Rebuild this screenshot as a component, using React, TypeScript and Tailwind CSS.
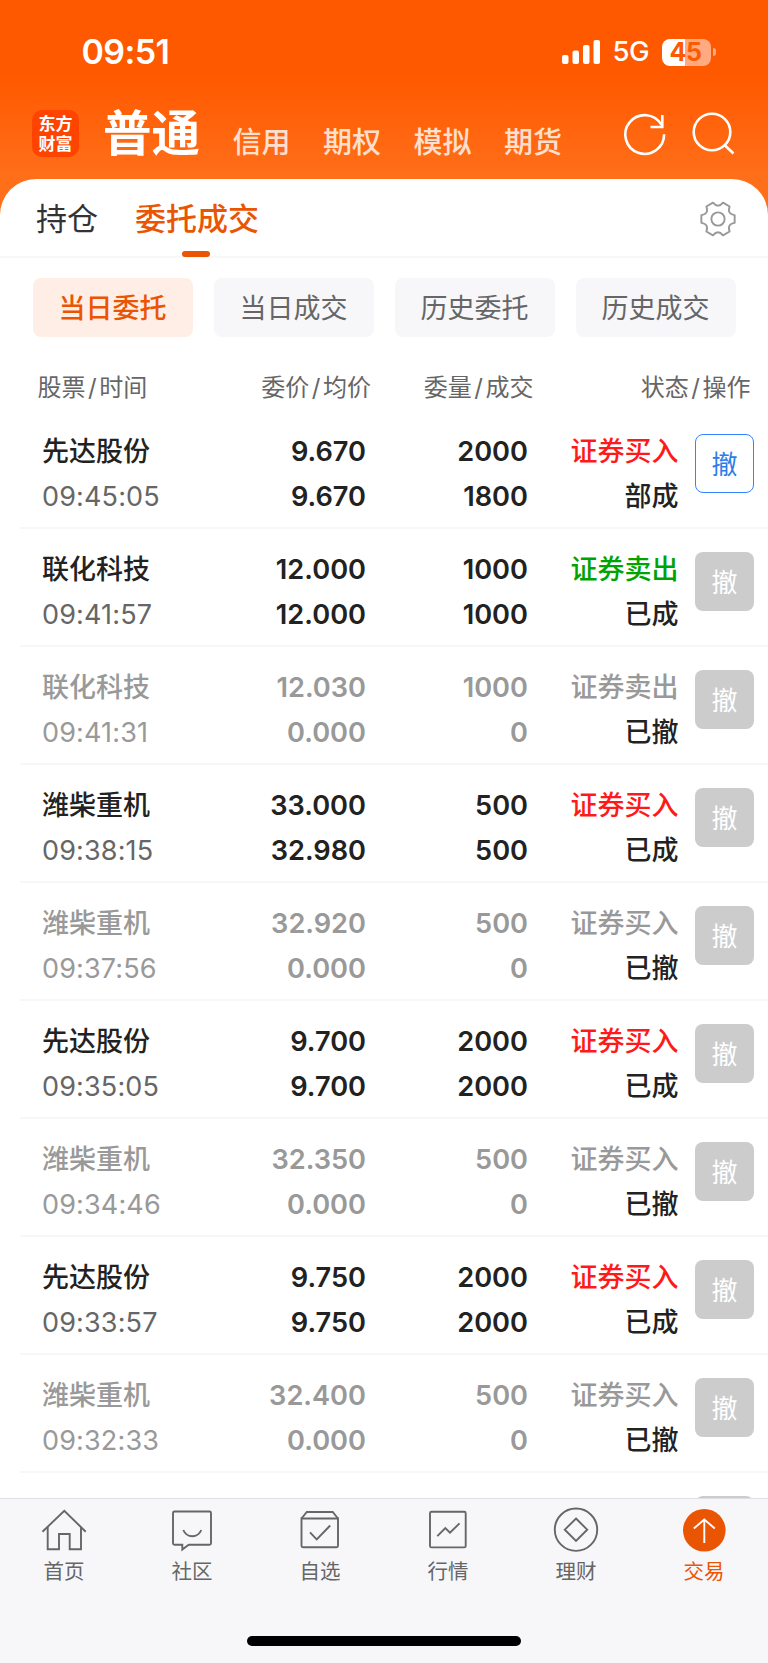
const FONT = "font-['Inter','Noto_Sans_CJK_SC',sans-serif]";

type Order = {
  name: string;
  time: string;
  price: string;
  avg: string;
  qty: string;
  filled: string;
  side: string;
  status: string;
};

const ORDERS: Order[] = [
  { name: "先达股份", time: "09:45:05", price: "9.670", avg: "9.670", qty: "2000", filled: "1800", side: "证券买入", status: "部成" },
  { name: "联化科技", time: "09:41:57", price: "12.000", avg: "12.000", qty: "1000", filled: "1000", side: "证券卖出", status: "已成" },
  { name: "联化科技", time: "09:41:31", price: "12.030", avg: "0.000", qty: "1000", filled: "0", side: "证券卖出", status: "已撤" },
  { name: "潍柴重机", time: "09:38:15", price: "33.000", avg: "32.980", qty: "500", filled: "500", side: "证券买入", status: "已成" },
  { name: "潍柴重机", time: "09:37:56", price: "32.920", avg: "0.000", qty: "500", filled: "0", side: "证券买入", status: "已撤" },
  { name: "先达股份", time: "09:35:05", price: "9.700", avg: "9.700", qty: "2000", filled: "2000", side: "证券买入", status: "已成" },
  { name: "潍柴重机", time: "09:34:46", price: "32.350", avg: "0.000", qty: "500", filled: "0", side: "证券买入", status: "已撤" },
  { name: "先达股份", time: "09:33:57", price: "9.750", avg: "9.750", qty: "2000", filled: "2000", side: "证券买入", status: "已成" },
  { name: "潍柴重机", time: "09:32:33", price: "32.400", avg: "0.000", qty: "500", filled: "0", side: "证券买入", status: "已撤" },
];

const MARKETS = ["信用", "期权", "模拟", "期货"];
const FILTERS = ["当日委托", "当日成交", "历史委托", "历史成交"];

const NAV = [
  {
    label: "首页",
    icon: (
      <>
        <path d="M2.5 25.7 24.3 4.8l21.4 20.9" />
        <path d="M7.7 21v22.3H19V28h10.7v15.3H41V21" />
      </>
    ),
  },
  {
    label: "社区",
    icon: (
      <>
        <path d="M6.5 5.5h35A1.5 1.5 0 0 1 43 7v30.2a1.5 1.5 0 0 1-1.5 1.5H20.7l-6.4 4.8v-4.8H6.5A1.5 1.5 0 0 1 5 37.2V7a1.5 1.5 0 0 1 1.5-1.5z" />
        <path d="M15.3 24c3.5 8.3 14.5 8.3 18 0" />
      </>
    ),
  },
  {
    label: "自选",
    icon: (
      <>
        <path d="M5.5 12.5H42v27.3a1.5 1.5 0 0 1-1.5 1.5H7a1.5 1.5 0 0 1-1.5-1.5z" />
        <path d="M5.5 12.5 10.8 6h25.900l5.300 6.500" />
        <path d="M14 26.3l6.7 7L34.2 19.5" />
      </>
    ),
  },
  {
    label: "行情",
    icon: (
      <>
        <rect x="6" y="5.7" width="35.7" height="35.7" rx="1.5" />
        <path d="M13.3 30.2l8-8.2 4.7 4.7 9.5-9.3" />
      </>
    ),
  },
  {
    label: "理财",
    icon: (
      <>
        <circle cx="24" cy="23.7" r="21.2" />
        <path d="M24 12.5 35.2 23.7 24 34.9 12.8 23.7z" />
      </>
    ),
  },
  {
    label: "交易",
    active: true,
    icon: (
      <>
        <circle cx="24.3" cy="24.3" r="21.3" fill="#ea5504" stroke="none" />
        <path d="M24.3 37V13.500M13.800 22.500l10.500-9 10.500 9" stroke="#fff" />
      </>
    ),
  },
];

function StatusBar() {
  return (
    <div className="flex h-[104px] items-center justify-between pl-[81.5px] pr-[52px]">
      <span className="text-[34px] font-semibold leading-none tracking-[-0.6px]">09:51</span>
      <div className="flex items-center">
        <svg className="h-6 w-[39px]" viewBox="0 0 39 24" fill="currentColor">
          <rect x="0" y="15" width="6.5" height="9" rx="2" />
          <rect x="10.5" y="10.5" width="6.5" height="13.5" rx="2" />
          <rect x="21" y="5" width="6.5" height="19" rx="2" />
          <rect x="31.5" y="0" width="6.5" height="24" rx="2" />
        </svg>
        <span className="ml-[11.5px] text-[27.5px] font-medium leading-none tracking-[-0.5px]">5G</span>
        <div className="ml-[13px] flex h-[27px] w-[49px] items-center justify-center rounded-lg bg-[linear-gradient(90deg,#fff_46%,#ffaa80_46%)] pr-0.5 text-[25px] font-bold leading-none tracking-[-0.5px] text-[#ff5900]">
          45
        </div>
        <div className="ml-[2px] h-2 w-[3px] rounded-r-full bg-[#ffaa80]" />
      </div>
    </div>
  );
}

function TopBar() {
  return (
    <div className="flex h-[75px] pl-8">
      <div className="mt-1.5 flex h-[47px] w-[47px] flex-col items-center justify-center rounded-[10px] bg-[#ff4400] text-[17px] font-bold leading-[20px]">
        <span>东方</span>
        <span>财富</span>
      </div>
      <h1 className="ml-6 mt-px text-[48.5px] font-bold leading-[58px]">普通</h1>
      <div className="ml-[32.5px] mt-[16.5px] flex gap-[32.5px] text-[29px] font-medium leading-[44px] text-[#ffe0cf]">
        {MARKETS.map((market) => (
          <span key={market}>{market}</span>
        ))}
      </div>
      <div className="ml-auto mr-[31px] mt-1.5 flex gap-5">
        <svg className="h-12 w-12" viewBox="0 0 48 48" fill="none" stroke="currentColor" strokeWidth="2.6">
          <path d="M43.1 24.300A19.400 19.400 0 1 1 40.500 14.800" />
          <path d="M41.300 5v12H29.500" />
        </svg>
        <svg className="h-12 w-12" viewBox="0 0 48 48" fill="none" stroke="currentColor" strokeWidth="2.6">
          <circle cx="23" cy="22" r="18.3" />
          <path d="M35.5 35l9 8.5" />
        </svg>
      </div>
    </div>
  );
}

function Tabs() {
  return (
    <div className="flex h-[79px] shrink-0 items-center border-b-2 border-[#f7f7f8] pl-9 pr-8 pt-[3px] text-[31px]">
      <span className="text-[#333]">持仓</span>
      <div className="relative ml-[37px] flex h-full items-center font-medium text-[#ea5504]">
        委托成交
        <div className="absolute -bottom-px left-[47px] h-1.5 w-7 rounded-[3px] bg-[#ea5504]" />
      </div>
      <svg
        className="ml-auto h-9 w-9"
        viewBox="-18.7 -18.7 37.4 37.4"
        fill="none"
        stroke="#999"
        strokeWidth="2"
        strokeLinejoin="round"
      >
        <circle r="6.9" />
        <path d="M17.300-4V4Q9.200 5.300 12.100 13L5.200 17Q0 10.600-5.200 17L-12.100 13Q-9.200 5.300-17.300 4V-4Q-9.200-5.300-12.100-13L-5.200-17Q0-10.600 5.200-17L12.100-13Q9.200-5.300 17.300-4Z" />
      </svg>
    </div>
  );
}

function Filters() {
  return (
    <div className="flex gap-[21px] px-[32.5px] pt-5">
      {FILTERS.map((label, i) => (
        <div
          key={label}
          className={`flex h-[59px] w-[160px] items-center justify-center rounded-lg pt-[3px] text-[27px] ${
            i === 0 ? "bg-[#feeee6] font-medium text-[#ea5504]" : "bg-[#f7f7fa] text-[#666]"
          }`}
        >
          {label}
        </div>
      ))}
    </div>
  );
}

function Head({ left, right }: { left: string; right: string }) {
  return (
    <span>
      {left}
      <span className="px-[2.5px]">/</span>
      {right}
    </span>
  );
}

function OrderRow({ order, cancellable }: { order: Order; cancellable: boolean }) {
  const cancelled = order.status === "已撤";
  const main = cancelled ? "text-[#999]" : "text-[#222]";
  const side = cancelled ? "text-[#999]" : order.side === "证券买入" ? "text-[#ff1a1a]" : "text-[#00a400]";

  return (
    <div className="ml-5 flex h-[118.06px] shrink-0 border-b-2 border-[#f7f7f8] pl-[22px] pr-3.5 pt-[17.5px] text-[27px] leading-[45px]">
      <div className="w-[150px]">
        <div className={`font-medium ${main}`}>{order.name}</div>
        <div className={`tracking-[0.15px] ${cancelled ? "text-[#999]" : "text-[#666]"}`}>{order.time}</div>
      </div>
      <div className={`w-[174px] text-right text-[27.2px] font-semibold ${main}`}>
        <div>{order.price}</div>
        <div>{order.avg}</div>
      </div>
      <div className={`w-[162px] text-right text-[27.2px] font-semibold ${main}`}>
        <div>{order.qty}</div>
        <div>{order.filled}</div>
      </div>
      <div className="w-[150.5px] text-right font-medium">
        <div className={side}>{order.side}</div>
        <div className="text-[#222]">{order.status}</div>
      </div>
      <button
        className={`ml-auto mt-[5px] flex h-[59px] w-[59px] items-center justify-center rounded-lg pt-0.5 text-[26px] ${
          cancellable ? "border-[1.5px] border-[#3385ff] text-[#2b7de9]" : "bg-[#ccc] text-white"
        }`}
      >
        撤
      </button>
    </div>
  );
}

export default function App() {
  return (
    <div className={`${FONT} flex h-[1663px] w-[768px] flex-col overflow-hidden bg-white`}>
      <header className="h-[218px] shrink-0 bg-[linear-gradient(180deg,#ff5900_0px,#ff5900_75px,#ff6f1a_179px,#ff6f1a_218px)] text-white">
        <StatusBar />
        <TopBar />
      </header>

      <main className="-mt-[39px] flex min-h-0 flex-1 flex-col overflow-hidden rounded-t-[36px] bg-white">
        <Tabs />
        <Filters />
        <div className="flex h-[74px] shrink-0 pl-[37.5px] pr-[17.5px] pt-[27px] text-[24px] leading-[48px] text-[#666]">
          <div className="w-[160px]"><Head left="股票" right="时间" /></div>
          <div className="w-[173.5px] text-right"><Head left="委价" right="均价" /></div>
          <div className="w-[162.5px] text-right"><Head left="委量" right="成交" /></div>
          <div className="flex-1 text-right"><Head left="状态" right="操作" /></div>
        </div>
        {ORDERS.map((order, i) => (
          <OrderRow key={order.time} order={order} cancellable={i === 0} />
        ))}
        {/* next row, cut off by the nav */}
        <div className="ml-auto mr-3.5 mt-[23px] h-[59px] w-[59px] shrink-0 rounded-lg bg-[#ccc]" />
      </main>

      <nav className="h-[165px] shrink-0 border-t border-[#dedee0] bg-[#f7f7fa]">
        <div className="flex pt-[7px]">
          {NAV.map((item) => (
            <div
              key={item.label}
              className={`flex w-32 flex-col items-center text-[20.5px] leading-[36px] ${
                item.active ? "text-[#ea5504]" : "text-[#666]"
              }`}
            >
              <svg className="h-12 w-12" viewBox="0 0 48 48" fill="none" stroke="currentColor" strokeWidth="1.9">
                {item.icon}
              </svg>
              {item.label}
            </div>
          ))}
        </div>
        <div className="mx-auto mt-[46px] h-2.5 w-[274px] rounded-full bg-black" />
      </nav>
    </div>
  );
}
